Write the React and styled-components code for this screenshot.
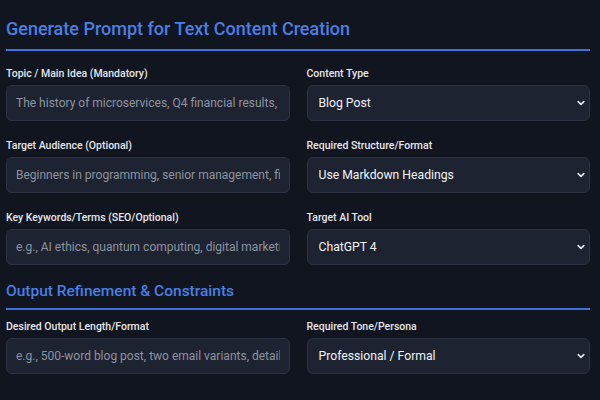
import React from "react";
import styled, { createGlobalStyle } from "styled-components";

const GlobalStyle = createGlobalStyle`
  html, body {
    margin: 0;
    padding: 0;
    background: #111520;
  }
  body {
    font-family: Roboto, "Noto Sans", "Liberation Sans", sans-serif;
    color: #e5e7eb;
  }
  * {
    box-sizing: border-box;
  }
`;

const Page = styled.div`
  width: 600px;
  height: 400px;
  overflow: hidden;
  padding: 17px 10px 0 6px;
`;

const Section = styled.section`
  margin-bottom: ${({ last }) => (last ? "0" : "16px")};
`;

const SectionTitle = styled.h2`
  margin: 0 0 ${({ small }) => (small ? "10px" : "16px")};
  padding-bottom: ${({ small }) => (small ? "7px" : "8px")};
  font-size: ${({ small }) => (small ? "15.5px" : "18px")};
  line-height: ${({ small }) => (small ? "20px" : "24px")};
  font-weight: 500;
  color: #4a7fe3;
  border-bottom: 2px solid #3b72dc;
`;

const Grid = styled.div`
  display: grid;
  grid-template-columns: 1fr 1fr;
  column-gap: 17px;
  row-gap: 18px;
`;

const Field = styled.div`
  display: flex;
  flex-direction: column;
`;

const Label = styled.label`
  font-size: 10.5px;
  line-height: 13px;
  font-weight: 500;
  color: #e5e7eb;
  margin-bottom: 5px;
`;

const Input = styled.input`
  height: 36px;
  width: 100%;
  padding: 0 9px;
  background: #1e2331;
  border: 1px solid #2b3242;
  border-radius: 6px;
  font-family: inherit;
  font-size: 12px;
  color: #e5e7eb;
  outline: none;
  &::placeholder {
    color: #8d94a0;
  }
`;

const SelectWrap = styled.div`
  position: relative;
`;

const Select = styled.select`
  appearance: none;
  height: 36px;
  width: 100%;
  padding: 0 24px 0 11px;
  background: #1e2331;
  border: 1px solid #2b3242;
  border-radius: 6px;
  font-family: inherit;
  font-size: 12.2px;
  font-weight: 400;
  color: #f1f3f6;
  outline: none;
`;

const Chevron = styled.svg`
  position: absolute;
  right: 5px;
  top: 50%;
  transform: translateY(-50%);
  pointer-events: none;
`;

const Dropdown = ({ value }) => (
  <SelectWrap>
    <Select defaultValue={value}>
      <option>{value}</option>
    </Select>
    <Chevron width="8" height="8" viewBox="0 0 8 8">
      <path d="M1.2 2.6 L4 5.4 L6.8 2.6" fill="none" stroke="#e5e7eb" strokeWidth="1.6" strokeLinecap="round" strokeLinejoin="round" />
    </Chevron>
  </SelectWrap>
);

export default function App() {
  return (
    <Page>
      <GlobalStyle />
      <Section>
        <SectionTitle>Generate Prompt for Text Content Creation</SectionTitle>
        <Grid>
          <Field>
            <Label>Topic / Main Idea (Mandatory)</Label>
            <Input placeholder="The history of microservices, Q4 financial results, market trends" />
          </Field>
          <Field>
            <Label>Content Type</Label>
            <Dropdown value="Blog Post" />
          </Field>
          <Field>
            <Label>Target Audience (Optional)</Label>
            <Input placeholder="Beginners in programming, senior management, first-time buyers" />
          </Field>
          <Field>
            <Label>Required Structure/Format</Label>
            <Dropdown value="Use Markdown Headings" />
          </Field>
          <Field>
            <Label>Key Keywords/Terms (SEO/Optional)</Label>
            <Input placeholder="e.g., AI ethics, quantum computing, digital marketing" />
          </Field>
          <Field>
            <Label>Target AI Tool</Label>
            <Dropdown value="ChatGPT 4" />
          </Field>
        </Grid>
      </Section>
      <Section last>
        <SectionTitle small>Output Refinement &amp; Constraints</SectionTitle>
        <Grid>
          <Field>
            <Label>Desired Output Length/Format</Label>
            <Input placeholder="e.g., 500-word blog post, two email variants, detailed outline" />
          </Field>
          <Field>
            <Label>Required Tone/Persona</Label>
            <Dropdown value="Professional / Formal" />
          </Field>
        </Grid>
      </Section>
    </Page>
  );
}
